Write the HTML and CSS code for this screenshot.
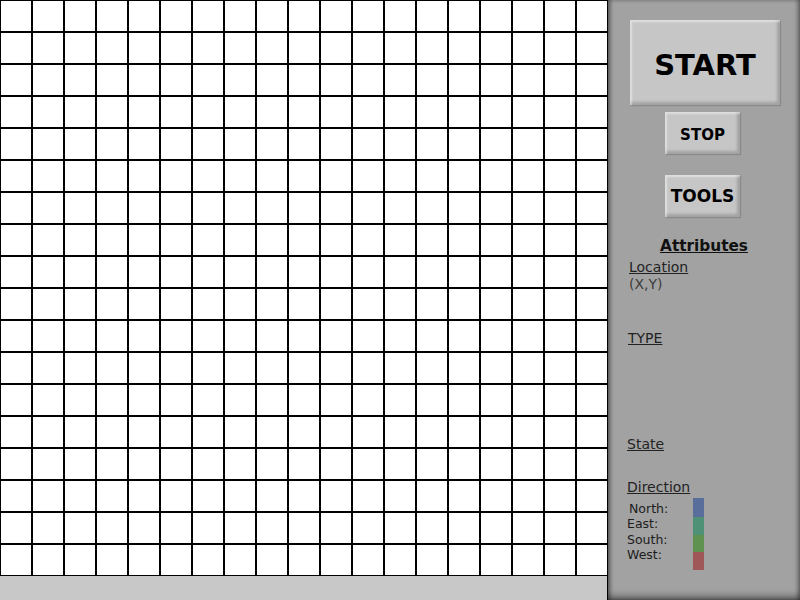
FILE: index.html
```html
<!DOCTYPE html>
<html>
<head>
<meta charset="utf-8">
<title>Grid Simulator</title>
<link rel="stylesheet" href="styles.css">
</head>
<body>
<div class="app">
  <div class="stage">
    <div class="board" id="board"></div>
    <div class="status-bar"></div>
  </div>
  <aside class="panel">
    <div class="controls">
      <button class="btn btn-start">START</button>
      <button class="btn btn-stop">STOP</button>
      <button class="btn btn-tools">TOOLS</button>
    </div>
    <h2 class="attr-title">Attributes</h2>
    <div class="attrs">
      <div class="field field-location">
        <div class="label">Location</div>
        <div class="value">(X,Y)</div>
      </div>
      <div class="field field-type">
        <div class="label">TYPE</div>
      </div>
      <div class="field field-state">
        <div class="label">State</div>
      </div>
      <div class="field field-direction">
        <div class="label">Direction</div>
        <div class="dir-row">
          <ul class="dir-names">
            <li class="dir-north">North:</li>
            <li>East:</li>
            <li>South:</li>
            <li>West:</li>
          </ul>
          <div class="swatches">
            <span class="swatch sw-north"></span>
            <span class="swatch sw-east"></span>
            <span class="swatch sw-south"></span>
            <span class="swatch sw-west"></span>
          </div>
        </div>
      </div>
    </div>
  </aside>
</div>
<script src="board.js"></script>
</body>
</html>
```

FILE: styles.css
```css
html, body {
  margin: 0;
  padding: 0;
}
body {
  width: 800px;
  height: 600px;
  overflow: hidden;
  font-family: "DejaVu Sans", Verdana, sans-serif;
  background: #a2a2a2;
}
.app {
  display: flex;
  width: 800px;
  height: 600px;
}
.stage {
  width: 608px;
  display: flex;
  flex-direction: column;
}
.board {
  display: grid;
  grid-template-columns: repeat(19, 32px);
  grid-template-rows: repeat(18, 32px);
  width: 608px;
  height: 576px;
  background: #fff;
}
.cell {
  box-sizing: border-box;
  border: 1px solid #000;
  background: #fff;
}
.status-bar {
  height: 24px;
  background: #c8c8c8;
  border-right: 1px solid #000;
}
.panel {
  width: 192px;
  height: 600px;
  box-sizing: border-box;
  background: #a2a2a2;
  box-shadow:
    inset 3px 0 4px -1px rgba(0, 0, 0, 0.45),
    inset -3px 0 4px -1px rgba(0, 0, 0, 0.4),
    inset 0 -7px 7px -3px rgba(0, 0, 0, 0.4),
    inset 0 2px 2px -1px rgba(255, 255, 255, 0.15);
  display: flex;
  flex-direction: column;
  color: #222;
}
.controls {
  display: flex;
  flex-direction: column;
  align-items: center;
  padding-top: 20px;
}
.btn {
  font-family: "DejaVu Sans", Verdana, sans-serif;
  font-weight: bold;
  color: #000;
  background: #c6c6c6;
  border: none;
  padding: 0;
  box-shadow:
    inset 2px 2px 2px rgba(255, 255, 255, 0.45),
    inset -3px -3px 3px rgba(0, 0, 0, 0.18),
    1px 1px 1px rgba(0, 0, 0, 0.15);
}
.btn-start {
  width: 150px;
  height: 85px;
  font-size: 29px;
  padding-top: 5px;
  margin-left: 2px;
}
.btn-stop {
  width: 75px;
  height: 42px;
  font-size: 15px;
  padding-top: 3px;
  margin-top: 7px;
  margin-right: 3px;
}
.btn-tools {
  width: 75px;
  height: 42px;
  font-size: 17px;
  margin-top: 21px;
  margin-right: 3px;
}
.attr-title {
  margin: 20px 0 0 0;
  font-size: 15.3px;
  line-height: 18px;
  font-weight: bold;
  text-align: center;
  text-decoration: underline;
  color: #111;
}
.attrs {
  padding-left: 19px;
  font-size: 14px;
  line-height: 18px;
}
.label {
  text-decoration: underline;
  color: #222;
}
.value {
  color: #3c3c3c;
}
.field-location {
  margin-top: 3px;
  padding-left: 2px;
}
.field-location .value {
  margin-top: -1px;
}
.field-type {
  margin-top: 36px;
  padding-left: 1px;
}
.field-state {
  margin-top: 88px;
}
.field-direction {
  margin-top: 25px;
}
.dir-row {
  display: flex;
  margin-top: 2px;
}
.dir-names {
  list-style: none;
  margin: 0;
  padding: 3px 0 0 0;
  width: 66px;
  font-size: 12.5px;
  line-height: 15.3px;
  color: #1c1c1c;
}
.dir-names .dir-north {
  padding-left: 2px;
}
.swatches {
  display: flex;
  flex-direction: column;
  width: 11px;
}
.swatch {
  display: block;
  height: 17.7px;
}
.sw-north { background: #5a6e9c; height: 19px; }
.sw-east { background: #4f9177; }
.sw-south { background: #5f9150; }
.sw-west { background: #a05757; }
```

FILE: board.js
```javascript
(function () {
  var board = document.getElementById('board');
  var cols = 19, rows = 18;
  var frag = document.createDocumentFragment();
  for (var r = 0; r < rows; r++) {
    for (var c = 0; c < cols; c++) {
      var cell = document.createElement('div');
      cell.className = 'cell';
      cell.dataset.x = c;
      cell.dataset.y = r;
      frag.appendChild(cell);
    }
  }
  board.appendChild(frag);
})();
```
